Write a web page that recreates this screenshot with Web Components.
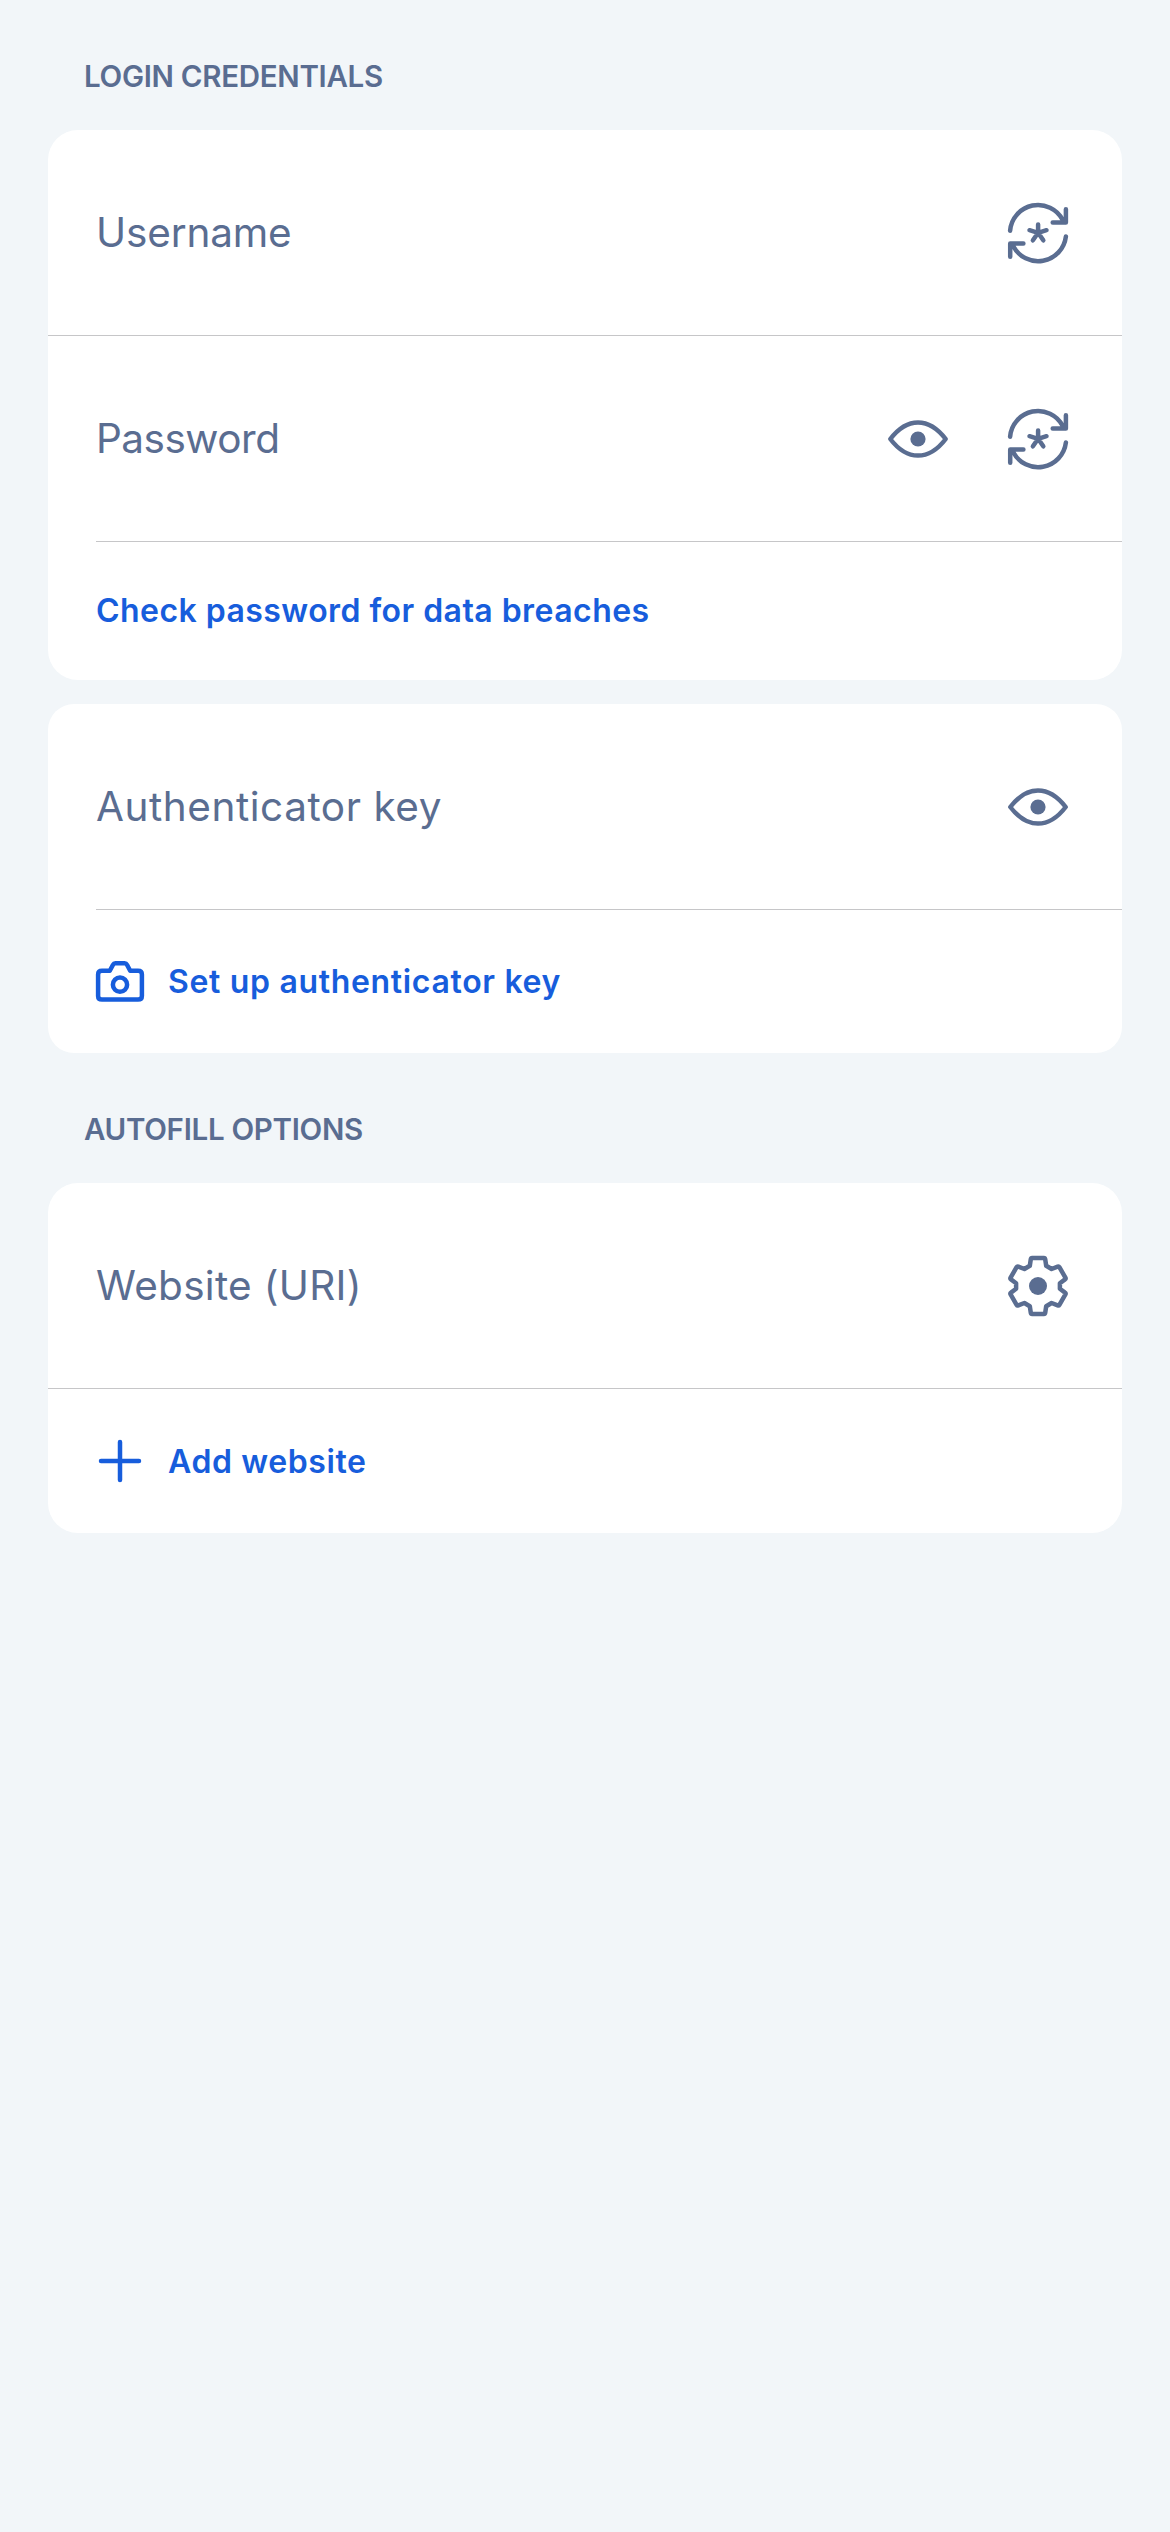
<!DOCTYPE html>
<html lang="en">
<head>
<meta charset="utf-8">
<title>Login item</title>
<style>
html,body{margin:0;background:#f2f6f9}
body{min-height:2532px;font-family:Inter,"Liberation Sans",sans-serif;color:#5a6d91}
</style>
</head>
<body>
<login-form></login-form>
<script>
const define=(name,html)=>customElements.define(name,class extends HTMLElement{
  constructor(){super();this.attachShadow({mode:'open'}).innerHTML=html;}
});

const ICONS={
  generate:`<path d="M2.1 27.7A28 28 0 0 1 54.8 17M44.7 19.4H57.9M57.9 6.2V19.4M57.9 33.5A28 28 0 0 1 5.2 43M2.2 40.5H15.4M2.2 40.5V53.7"/><path d="M30.1 29.8V21.4M30.1 29.8L38.5 27.2M30.1 29.8L35.3 37.3M30.1 29.8L24.9 37.3M30.1 29.8L21.5 27.2"/>`,
  eye:`<path d="M2.3 30Q15 13.4 30 13.4T57.7 30Q45 46.6 30 46.6T2.3 30Z"/><circle cx="30" cy="30" r="7.6" fill="currentColor" stroke="none"/>`,
  gear:`<path d="M24.1 2.1H35.9Q37 2.1 37.2 3.2L38.2 9.8L43.6 13L49.7 10.6Q50.8 10.2 51.4 11.2L57.4 21.6Q58 22.7 57 23.4L51.9 27.2V32.8L57 36.6Q58 37.3 57.4 38.4L51.4 48.8Q50.8 49.8 49.7 49.4L43.6 47L38.2 50.2L37.2 56.8Q37 57.9 35.9 57.9H24.1Q23 57.9 22.8 56.8L21.8 50.2L16.4 47L10.3 49.4Q9.2 49.8 8.6 48.8L2.6 38.4Q2 37.3 3 36.6L8.1 32.8V27.2L3 23.4Q2 22.7 2.6 21.6L8.6 11.2Q9.2 10.2 10.3 10.6L16.4 13L21.8 9.8L22.8 3.2Q23 2.1 24.1 2.1Z"/><circle cx="30" cy="30" r="9" fill="currentColor" stroke="none"/>`,
  camera:`<path d="M6 13.8H13.8L17 7.8Q17.8 6.2 19.4 6.2H28.6Q30.2 6.2 31 7.8L34.2 13.8H42Q45.9 13.8 45.9 17.4V39Q45.9 42.6 42 42.6H6Q2.1 42.6 2.1 39V17.4Q2.1 13.8 6 13.8Z"/><circle cx="24" cy="27.7" r="7.1"/>`,
  plus:`<path d="M5 24H43M24 5V43"/>`
};
customElements.define('vault-icon',class extends HTMLElement{
  connectedCallback(){
    const n=this.getAttribute('name'),s=n==='camera'||n==='plus'?48:60;
    this.attachShadow({mode:'open'}).innerHTML=`<style>:host{display:block;flex:none}svg{display:block;overflow:visible}</style><svg width="${s}" height="${s}" viewBox="0 0 ${s} ${s}" fill="none" stroke="currentColor" stroke-width="4.5" stroke-linecap="round" stroke-linejoin="round">${ICONS[n]}</svg>`;
  }
});
define('section-title',`<style>:host{display:flex;align-items:center;height:60px;padding-left:84px;font-size:29.5px;font-weight:600;letter-spacing:-.3px;white-space:nowrap}</style><slot></slot>`);
define('vault-card',`<style>:host{display:block;margin:0 48px;background:#fff;border-radius:var(--radius,30px);overflow:hidden}</style><slot></slot>`);
define('card-divider',`<style>:host{display:block;height:1px;background:#c6c6c8}:host([inset]){margin-left:48px}</style>`);
define('field-row',`<style>:host{display:flex;align-items:center;height:205px;padding:1px 54px 0 48px;box-sizing:border-box;font-size:40.5px;font-weight:400;letter-spacing:var(--track,0)}.label{flex:1;white-space:nowrap;padding-bottom:1px}.icons{display:flex;gap:60px}</style><span class="label"><slot></slot></span><div class="icons"><slot name="icon"></slot></div>`);
define('action-row',`<style>:host{display:flex;align-items:center;gap:24px;height:var(--h,144px);padding:0 0 var(--pb,0) 48px;box-sizing:border-box;color:#175ddc;font-size:32px;font-weight:600;letter-spacing:var(--track,0);white-space:nowrap}</style><slot name="icon"></slot><span><slot></slot></span>`);
define('login-form',`<style>:host{display:flex;flex-direction:column;padding-top:46px}.first{margin-bottom:24px}.autofill{margin:46px 0 24px}.auth{margin-top:24px;--radius:26px}</style>
<section-title class="first">LOGIN CREDENTIALS</section-title>
<vault-card>
<field-row style="--track:-.15px">Username<vault-icon slot="icon" name="generate"></vault-icon></field-row>
<card-divider></card-divider>
<field-row style="--track:-.5px">Password<vault-icon slot="icon" name="eye"></vault-icon><vault-icon slot="icon" name="generate"></vault-icon></field-row>
<card-divider inset></card-divider>
<action-row style="--h:138px;--track:.45px;--pb:1px">Check password for data breaches</action-row>
</vault-card>
<vault-card class="auth">
<field-row style="--track:.55px">Authenticator key<vault-icon slot="icon" name="eye"></vault-icon></field-row>
<card-divider inset></card-divider>
<action-row style="--h:143px;--track:.67px;--pb:1px"><vault-icon slot="icon" name="camera"></vault-icon>Set up authenticator key</action-row>
</vault-card>
<section-title class="autofill">AUTOFILL OPTIONS</section-title>
<vault-card>
<field-row style="--track:.3px">Website (URI)<vault-icon slot="icon" name="gear"></vault-icon></field-row>
<card-divider></card-divider>
<action-row style="--track:.6px"><vault-icon slot="icon" name="plus"></vault-icon>Add website</action-row>
</vault-card>`);
</script>
</body>
</html>
